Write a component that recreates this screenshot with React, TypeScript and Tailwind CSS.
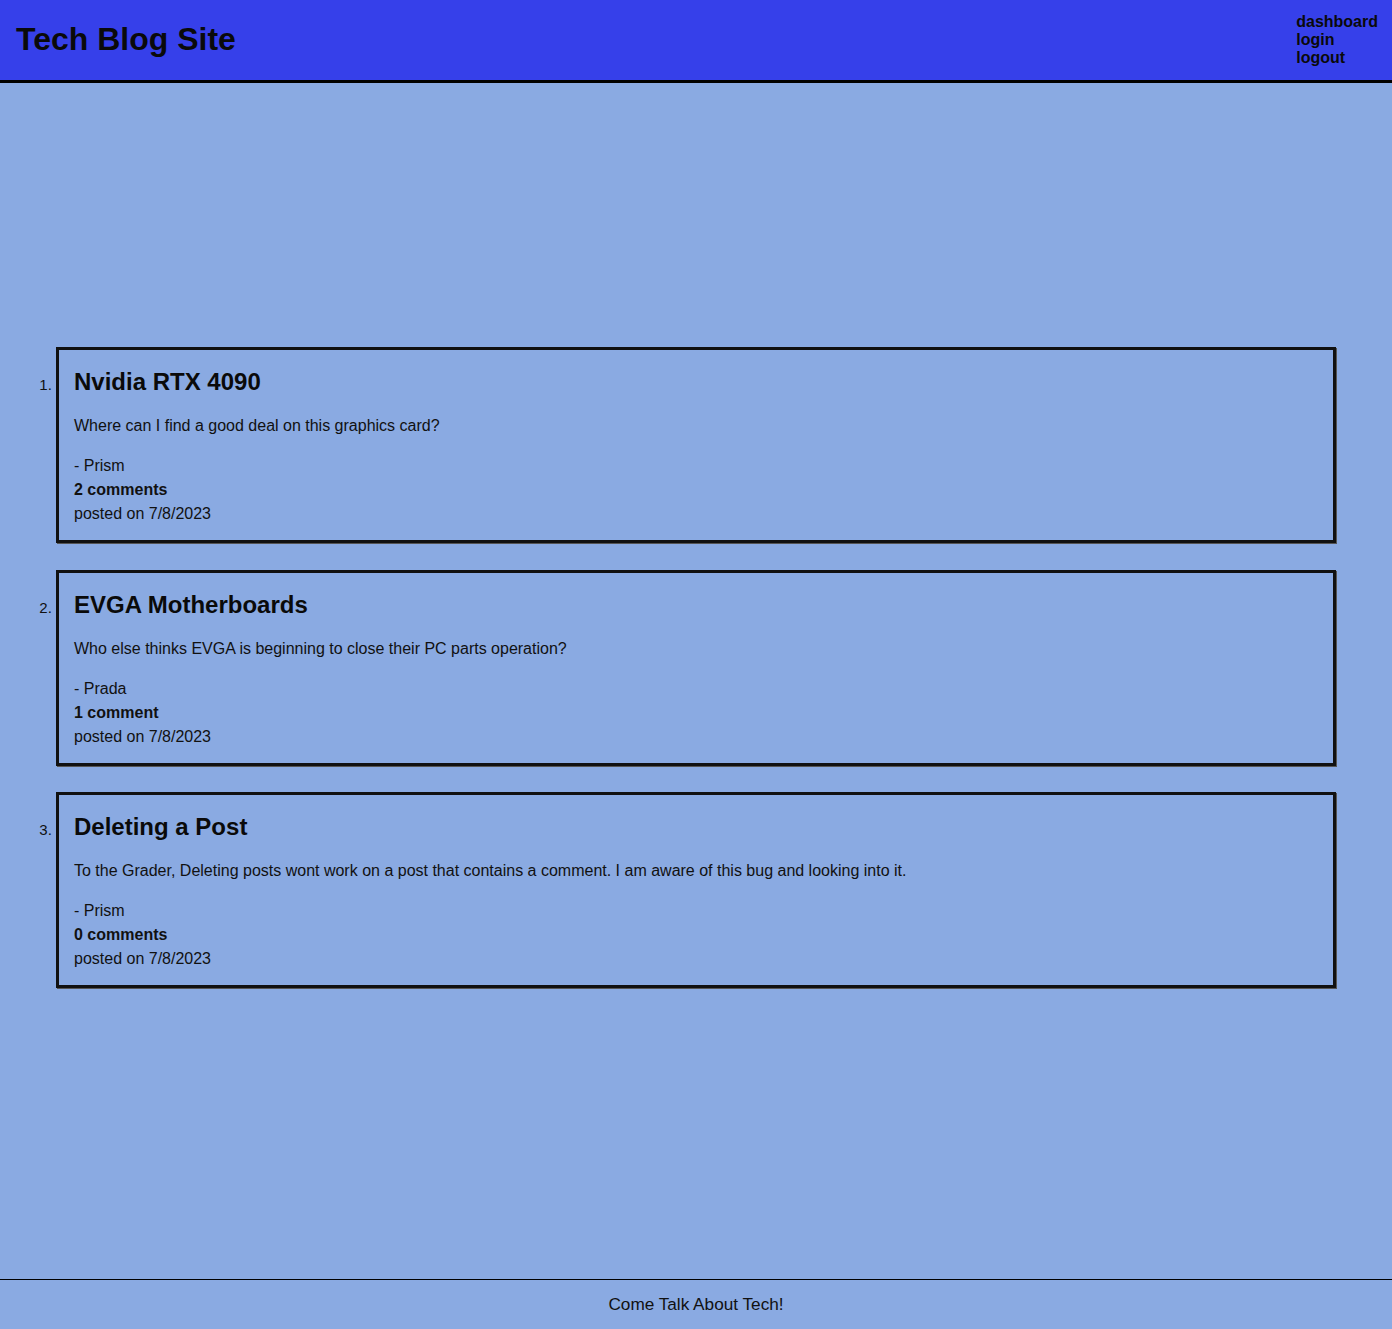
import React from 'react';

type Post = {
  title: string;
  body: string;
  author: string;
  comments: number;
  date: string;
};

const posts: Post[] = [
  {
    title: 'Nvidia RTX 4090',
    body: 'Where can I find a good deal on this graphics card?',
    author: 'Prism',
    comments: 2,
    date: '7/8/2023'
  },
  {
    title: 'EVGA Motherboards',
    body: 'Who else thinks EVGA is beginning to close their PC parts operation?',
    author: 'Prada',
    comments: 1,
    date: '7/8/2023'
  },
  {
    title: 'Deleting a Post',
    body: 'To the Grader, Deleting posts wont work on a post that contains a comment. I am aware of this bug and looking into it.',
    author: 'Prism',
    comments: 0,
    date: '7/8/2023'
  }
];

const PostCard: React.FC<{ post: Post }> = ({ post }) => (
  <li className="pl-0">
    <div className="border-[3px] border-[#111] px-[15px] pt-[18px] pb-[14px] shadow-[1px_1px_0_#555]">
      <h2 className="text-[24px] font-bold leading-[28px] text-[#0a0a0a]">{post.title}</h2>
      <p className="mt-[18px] text-[16px] leading-[24px]">{post.body}</p>
      <p className="mt-[16px] text-[16px] leading-[24px]">- {post.author}</p>
      <p className="text-[16px] font-bold leading-[24px]">
        {post.comments} {post.comments === 1 ? 'comment' : 'comments'}
      </p>
      <p className="text-[16px] leading-[24px]">posted on {post.date}</p>
    </div>
  </li>
);

export default function App() {
  return (
    <div className="flex min-h-screen flex-col bg-[#8aaae2] font-['Liberation_Sans',Arial,sans-serif] text-[#111]">
      <header className="flex h-[83px] items-start justify-between border-b-[3px] border-black bg-[#3640ea]">
        <h1 className="self-center pl-[16px] pb-[2px] text-[32px] font-bold leading-[36px] text-[#0a0a0a]">
          Tech Blog Site
        </h1>
        <nav className="flex flex-col pt-[13px] pr-[14px] text-[16px] font-bold leading-[18px] text-[#0a0a0a]">
          <a href="#">dashboard</a>
          <a href="#">login</a>
          <a href="#">logout</a>
        </nav>
      </header>

      <main className="flex-1 px-[16px]">
        <ol className="mt-[264px] list-decimal space-y-[26.5px] pl-[40px] pr-[40px] marker:text-[15px]">
          {posts.map(post => (
            <PostCard key={post.title} post={post} />
          ))}
        </ol>
      </main>

      <footer className="flex h-[50px] items-center justify-center border-t border-black text-[17.2px]">
        Come Talk About Tech!
      </footer>
    </div>
  );
}
